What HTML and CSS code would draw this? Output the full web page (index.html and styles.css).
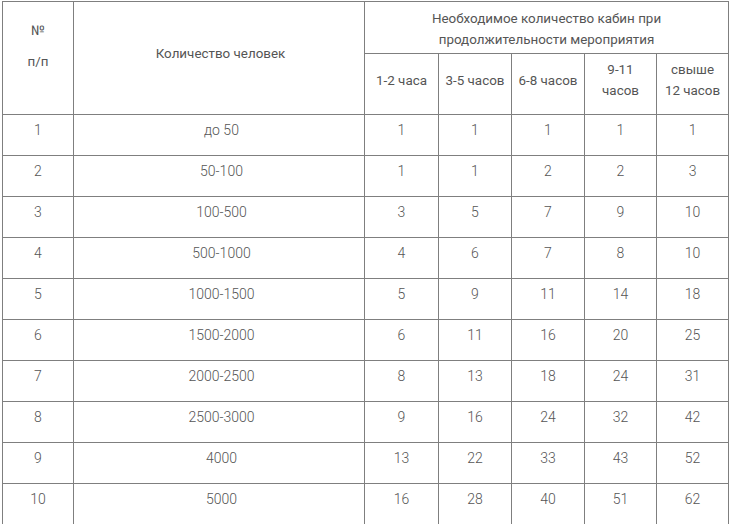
FILE: index.html
```html
<!DOCTYPE html>
<html lang="ru">
<head>
<meta charset="utf-8">
<link rel="stylesheet" href="styles.css">
</head>
<body>
<table class="cabins">
  <colgroup>
    <col class="c-num">
    <col class="c-people">
    <col class="c-h1">
    <col class="c-h2">
    <col class="c-h3">
    <col class="c-h4">
    <col class="c-h5">
  </colgroup>
  <thead>
    <tr class="head-top">
      <th rowspan="2" class="th-num"><span class="line">№</span><span class="line gap">п/п</span></th>
      <th rowspan="2" class="th-people">Количество человек</th>
      <th colspan="5" class="th-group">Необходимое количество кабин при продолжительности мероприятия</th>
    </tr>
    <tr class="head-sub">
      <th class="th-sub">1-2 часа</th>
      <th class="th-sub">3-5 часов</th>
      <th class="th-sub">6-8 часов</th>
      <th class="th-sub">9-11 часов</th>
      <th class="th-sub">свыше 12 часов</th>
    </tr>
  </thead>
  <tbody>
    <tr><td>1</td><td class="people">до 50</td><td>1</td><td>1</td><td>1</td><td>1</td><td>1</td></tr>
    <tr><td>2</td><td class="people">50-100</td><td>1</td><td>1</td><td>2</td><td>2</td><td>3</td></tr>
    <tr><td>3</td><td class="people">100-500</td><td>3</td><td>5</td><td>7</td><td>9</td><td>10</td></tr>
    <tr><td>4</td><td class="people">500-1000</td><td>4</td><td>6</td><td>7</td><td>8</td><td>10</td></tr>
    <tr><td>5</td><td class="people">1000-1500</td><td>5</td><td>9</td><td>11</td><td>14</td><td>18</td></tr>
    <tr><td>6</td><td class="people">1500-2000</td><td>6</td><td>11</td><td>16</td><td>20</td><td>25</td></tr>
    <tr><td>7</td><td class="people">2000-2500</td><td>8</td><td>13</td><td>18</td><td>24</td><td>31</td></tr>
    <tr><td>8</td><td class="people">2500-3000</td><td>9</td><td>16</td><td>24</td><td>32</td><td>42</td></tr>
    <tr><td>9</td><td class="people">4000</td><td>13</td><td>22</td><td>33</td><td>43</td><td>52</td></tr>
    <tr><td>10</td><td class="people">5000</td><td>16</td><td>28</td><td>40</td><td>51</td><td>62</td></tr>
  </tbody>
</table>
</body>
</html>
```

FILE: styles.css
```css
html, body {
  margin: 0;
  padding: 0;
  background: #ffffff;
}

body {
  font-family: Roboto, "Liberation Sans", Arial, sans-serif;
  font-size: 14px;
  font-weight: 300;
  color: #555555;
  line-height: 21px;
}

.cabins {
  border-collapse: collapse;
  table-layout: fixed;
  width: 727px;
  margin: 1px 0 0 2px;
}

.c-num { width: 71px; }
.c-people { width: 291px; }
.c-h1 { width: 74px; }
.c-h2 { width: 73px; }
.c-h3 { width: 73px; }
.c-h4 { width: 72px; }
.c-h5 { width: 72px; }

.cabins th,
.cabins td {
  border: 1px solid #7f7f7f;
  text-align: center;
  padding: 0 5px;
}

.cabins th {
  font-size: 13.4px;
  font-weight: 400;
  color: #555555;
}

.head-top { height: 52px; }
.head-sub { height: 61px; }

.cabins .th-num {
  vertical-align: top;
  padding-top: 18px;
}

.th-num .line {
  display: block;
}

.th-num .gap {
  margin-top: 10px;
}

.cabins .th-people {
  vertical-align: top;
  padding-top: 41px;
  padding-left: 8px;
}

.cabins .th-group {
  vertical-align: top;
  padding-top: 6px;
  padding-bottom: 3px;
}

.cabins .th-sub {
  vertical-align: middle;
  padding-top: 4px;
  padding-bottom: 12px;
}

.cabins tbody tr { height: 41px; }

.cabins td {
  vertical-align: top;
  padding-top: 5px;
  font-weight: 300;
}

.cabins td.people {
  padding-left: 10px;
}
```
